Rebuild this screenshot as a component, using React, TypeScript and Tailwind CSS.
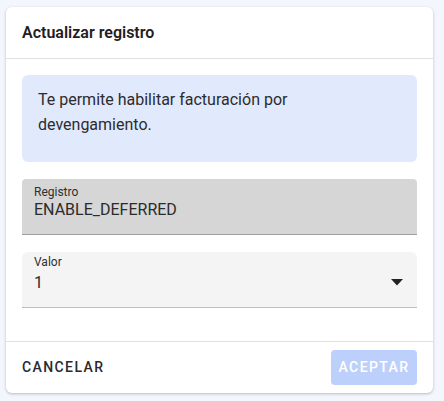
export default function App() {
    return (
        <div
            className="min-h-[401px] bg-[#f3f7fd] pl-[6px] pr-[11px] pt-[7px] pb-[8px]"
            style={{ fontFamily: 'Roboto, "Liberation Sans", sans-serif' }}
        >
            <div className="overflow-hidden rounded-md bg-white shadow-[0_1px_3px_rgba(0,0,0,0.25)]">
                <header className="flex h-[52px] items-center border-b border-[#e0e0e0] px-4">
                    <h2 className="text-[16px] font-semibold text-[#1f2023]">
                        Actualizar registro
                    </h2>
                </header>
                <div className="flex flex-col gap-[17px] px-4 pb-[33px] pt-4">
                    <div className="rounded-md bg-[#e1e9fc] pb-[25px] pl-4 pr-4 pt-3 text-[16px] leading-[25px] text-[#2b2c30]">
                        <p className="max-w-[270px]">
                            Te permite habilitar facturación por devengamiento.
                        </p>
                    </div>
                    <div className="h-[56px] rounded-t border-b border-[#9e9e9e] bg-[#d6d6d6] px-3 pt-[5px]">
                        <div className="text-[12px] leading-[16px] text-[#2f2f2f]">
                            Registro
                        </div>
                        <div className="text-[16px] leading-[20px] text-[#2b2b2b]">
                            ENABLE_DEFERRED
                        </div>
                    </div>
                    <div className="flex h-[56px] items-start justify-between rounded-t-md border-b border-[#bdbdbd] bg-[#f4f4f4] pl-3 pr-[14px] pt-[2px]">
                        <div>
                            <div className="text-[12px] leading-[16px] text-[#2f2f2f]">
                                Valor
                            </div>
                            <div className="mt-[1px] text-[16px] leading-[24px] text-[#2b2b2b]">
                                1
                            </div>
                        </div>
                        <svg
                            className="mt-[25px]"
                            width="12"
                            height="7"
                            viewBox="0 0 12 7"
                        >
                            <path d="M0 0h12L6 6.5z" fill="#222" />
                        </svg>
                    </div>
                </div>
                <footer className="flex h-[52px] items-center justify-between border-t border-[#e0e0e0] px-4">
                    <button className="text-[14px] font-medium tracking-[0.1em] text-[#2a2a2e]">
                        CANCELAR
                    </button>
                    <button className="h-[35px] w-[86px] rounded bg-[#bdd0fc] text-[14px] font-medium tracking-[0.1em] text-white">
                        ACEPTAR
                    </button>
                </footer>
            </div>
        </div>
    );
}
